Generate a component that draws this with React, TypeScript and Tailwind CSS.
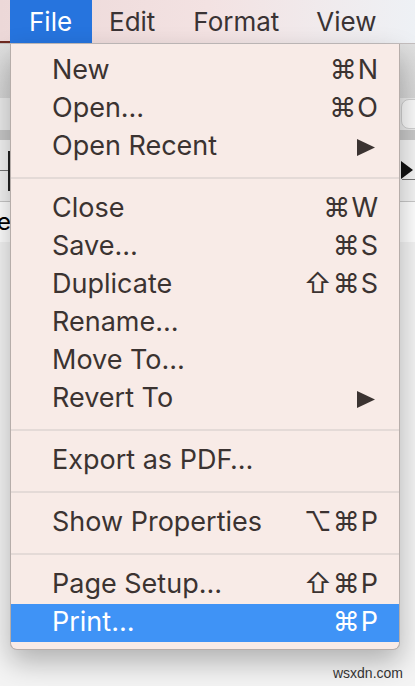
import React from 'react';

type Entry =
  | { kind: 'item'; label: string; keys?: string; submenu?: boolean; active?: boolean }
  | { kind: 'sep' };

const fileMenu: Entry[] = [
  { kind: 'item', label: 'New', keys: '⌘N' },
  { kind: 'item', label: 'Open…', keys: '⌘O' },
  { kind: 'item', label: 'Open Recent', submenu: true },
  { kind: 'sep' },
  { kind: 'item', label: 'Close', keys: '⌘W' },
  { kind: 'item', label: 'Save…', keys: '⌘S' },
  { kind: 'item', label: 'Duplicate', keys: '⇧⌘S' },
  { kind: 'item', label: 'Rename…' },
  { kind: 'item', label: 'Move To…' },
  { kind: 'item', label: 'Revert To', submenu: true },
  { kind: 'sep' },
  { kind: 'item', label: 'Export as PDF…' },
  { kind: 'sep' },
  { kind: 'item', label: 'Show Properties', keys: '⌥⌘P' },
  { kind: 'sep' },
  { kind: 'item', label: 'Page Setup…', keys: '⇧⌘P' },
  { kind: 'item', label: 'Print…', keys: '⌘P', active: true },
];

const font = { fontFamily: 'Inter, "DejaVu Sans", sans-serif' };

function SubmenuArrow({ color }: { color: string }) {
  return (
    <svg width="18" height="17" viewBox="0 0 18 17">
      <polygon points="0,0 18,8.5 0,17" fill={color} />
    </svg>
  );
}

function MenuRow({ entry }: { entry: Entry }) {
  if (entry.kind === 'sep') {
    return (
      <div className="h-[24px] flex items-center">
        <div className="h-[2px] w-full bg-[#e4dad7]" />
      </div>
    );
  }
  const text = entry.active ? 'text-white' : 'text-[#3b3331]';
  return (
    <div
      className={`h-[38px] flex items-center justify-between pl-[41px] pr-[20px] text-[27px] leading-none ${text} ${
        entry.active ? 'bg-[#3f93f6]' : ''
      }`}
    >
      <span className="-mt-[3px]">{entry.label}</span>
      {entry.keys && <span className="-mt-[3px] tracking-[1px]">{entry.keys}</span>}
      {entry.submenu && (
        <span className="pr-[4px]">
          <SubmenuArrow color="#3b3331" />
        </span>
      )}
    </div>
  );
}

export default function App() {
  return (
    <div className="relative w-[415px] h-[686px] overflow-hidden bg-[#f4f4f4]" style={font}>
      {/* menu bar */}
      <div className="h-[44px] flex items-stretch bg-gradient-to-r from-[#ecd8d8] via-[#f3e2e2] to-[#eef1f5] border-b border-[#c4bebe] text-[26px] text-[#3a3334]">
        <div className="w-[10px] flex flex-col justify-end">
          <div className="h-[2px] bg-[#6e2a22]" />
        </div>
        <div className="w-[82px] bg-[#2674de] text-white flex items-center pl-[19px]">File</div>
        <div className="pl-[17px] flex items-center">Edit</div>
        <div className="pl-[38px] flex items-center">Format</div>
        <div className="pl-[37px] flex items-center">View</div>
      </div>

      {/* window behind the menu */}
      <div className="flex flex-col">
        <div className="h-[54px] bg-gradient-to-b from-[#e0e0e0] to-[#d6d6d6] flex justify-end items-start pt-[10px]">
          <span className="text-[22px] text-[#b9b9b9] -mr-[14px]">it</span>
        </div>
        <div className="h-[32px] bg-[#ececec] flex justify-end items-center">
          <div className="w-[22px] h-[30px] rounded-[8px] bg-[#fafafa] border border-[#d0d0d0] -mr-[8px]" />
        </div>
        <div className="h-[10px] bg-[#c8c8c8]" />
        <div className="h-[62px] bg-[#f4f4f4] border-b border-[#c9c9c9] flex items-center justify-between">
          <div className="flex items-center">
            <div className="w-[8px] h-[1px] bg-[#777]" />
            <div className="w-[2px] h-[40px] bg-[#222]" />
          </div>
          <div className="flex flex-col items-end">
            <svg width="12" height="18" viewBox="0 0 12 18" className="mr-[2px]">
              <polygon points="0,0 12,9 0,18" fill="#111" />
            </svg>
            <div className="w-[13px] h-[1px] bg-[#777]" />
          </div>
        </div>
        <div className="h-[40px] bg-white flex items-center">
          <span className="text-[24px] text-black -ml-[3px]">e</span>
        </div>
        <div className="flex-1 bg-[#f2f2f2]" />
      </div>

      {/* File dropdown */}
      <div className="absolute left-[10px] top-[44px] w-[390px] pt-[8px] pb-[7px] bg-[#f8ebe7] border-x border-b border-[#b6adaa] rounded-b-[7px] shadow-[0_12px_28px_rgba(0,0,0,0.28)]">
        {fileMenu.map((entry, i) => (
          <MenuRow key={i} entry={entry} />
        ))}
      </div>

      <div className="absolute right-[12px] bottom-[2px] text-[14px] text-[#333]" style={{ fontFamily: '"Liberation Sans", sans-serif' }}>
        wsxdn.com
      </div>
    </div>
  );
}
